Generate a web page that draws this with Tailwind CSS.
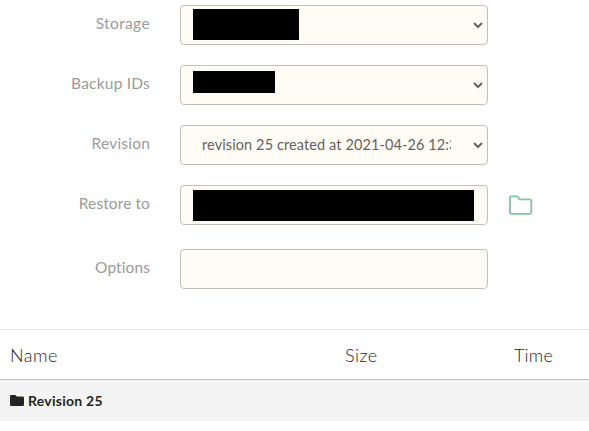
<!DOCTYPE html>
<html lang="en">
<head>
  <meta charset="UTF-8" />
  <meta name="viewport" content="width=device-width, initial-scale=1.0"/>
  <title>Restore</title>
  <script src="https://cdn.jsdelivr.net/npm/@tailwindcss/browser@4"></script>
</head>
<body class="bg-white font-['Lato',sans-serif] text-[#66615b] overflow-hidden">

  <!-- Restore form -->
  <form class="pt-[5px] text-[15.5px] leading-5 whitespace-nowrap">
    <div class="flex h-10 mb-5">
      <label class="w-[150px] mr-[30px] pt-2 text-right text-[#9a9a9a] tracking-[0.38px]">Storage</label>
      <div class="flex items-start w-[308px] h-10 pl-3 pt-[3px] pr-1 rounded border border-[#c4c0b9] bg-[#fffcf5]">
        <span class="w-[106px] h-[31px] bg-black"></span>
        <svg class="ml-auto mt-[13px] w-[10px] h-[7px]" viewBox="0 0 10 7" fill="none" stroke="#66615b" stroke-width="2"><path d="M1 1l4 4 4-4" /></svg>
      </div>
    </div>

    <div class="flex h-10 mb-5">
      <label class="w-[150px] mr-[30px] pt-2 text-right text-[#9a9a9a] tracking-[0.2px]">Backup IDs</label>
      <div class="flex items-start w-[308px] h-10 pl-3 pt-[3px] pr-1 rounded border border-[#c4c0b9] bg-[#fffcf5]">
        <span class="w-[82px] h-[22px] mt-[2px] bg-black"></span>
        <svg class="ml-auto mt-[13px] w-[10px] h-[7px]" viewBox="0 0 10 7" fill="none" stroke="#66615b" stroke-width="2"><path d="M1 1l4 4 4-4" /></svg>
      </div>
    </div>

    <div class="flex h-10 mb-5">
      <label class="w-[150px] mr-[30px] pt-2 text-right text-[#9a9a9a] tracking-[0.2px]">Revision</label>
      <div class="flex items-start w-[308px] h-10 pl-[21px] pt-[3px] pr-1 rounded border border-[#c4c0b9] bg-[#fffcf5]">
        <span class="w-[249px] mt-[6px] overflow-hidden text-[14.5px] tracking-[0.1px]">revision 25 created at 2021-04-26 12:3</span>
        <svg class="ml-auto mt-[13px] w-[10px] h-[7px]" viewBox="0 0 10 7" fill="none" stroke="#66615b" stroke-width="2"><path d="M1 1l4 4 4-4" /></svg>
      </div>
    </div>

    <div class="flex h-10 mb-6">
      <label class="w-[150px] mr-[30px] pt-2 text-right text-[#9a9a9a] tracking-[0.1px]">Restore to</label>
      <div class="w-[308px] h-10 pl-3 pt-1 rounded border border-[#c4c0b9] bg-[#fffcf5]">
        <div class="w-[281px] h-[31px] bg-black"></div>
      </div>
      <svg class="ml-[21px] mt-[10px] w-6 h-5" viewBox="0 0 24 20" fill="none" stroke="#83c3a0" stroke-width="1.8" stroke-linejoin="round"><path d="M1 17V3Q1 1.300 2.700 1.300H8q1.500 0 1.800 1.500l.4 1.600h10.300q1.800 0 1.800 1.800V17q0 1.800-1.800 1.800H2.800Q1 18.800 1 17Z" /></svg>
    </div>

    <div class="flex h-10">
      <label class="w-[150px] mr-[30px] pt-2 text-right text-[#9a9a9a] tracking-[0.1px]">Options</label>
      <div class="w-[308px] h-10 rounded border border-[#c4c0b9] bg-[#fffcf5]"></div>
    </div>
  </form>

  <!-- File list -->
  <div class="mt-10">
    <div class="flex h-[51px] pt-[13px] border-t border-b border-t-[#e8e7e3] border-b-[#c4c0b9] text-[18px] leading-6 font-light text-[#252422] tracking-[0.5px]">
      <span class="w-[335px] ml-[10px]">Name</span>
      <span class="w-[169px]">Size</span>
      <span class="tracking-[0.2px]">Time</span>
    </div>
    <div class="flex items-center h-[41px] pl-[10px] bg-[#f4f4f4] text-[14px] font-bold text-[#252422] tracking-[0.25px]">
      <svg class="w-[14px] h-[11px] mr-1" viewBox="0 0 14 11" fill="currentColor"><path d="M1.3 0h4l1.500 1.500h5.900Q14 1.500 14 2.800v6.900Q14 11 12.700 11H1.300Q0 11 0 9.700V1.300Q0 0 1.300 0Z" /></svg>
      <span class="-mt-px">Revision 25</span>
    </div>
  </div>

</body>
</html>
